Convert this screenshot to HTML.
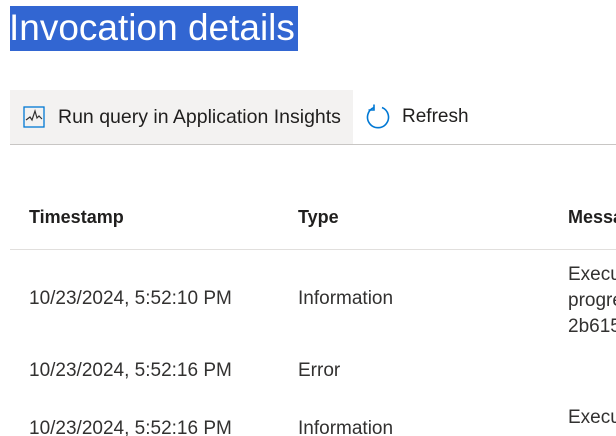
<!DOCTYPE html>
<html><head><meta charset="utf-8"><style>
html,body{margin:0;padding:0;width:616px;height:436px;overflow:hidden;background:#fff;font-family:"Liberation Sans",sans-serif;color:#323130;position:relative;}
.a{position:absolute;white-space:nowrap;}
</style></head><body>
<div class="a" style="left:10px;top:6px;width:288px;height:45px;background:#3266d2;"></div>
<div class="a" style="left:9px;top:5px;font-size:37px;line-height:46px;color:#fff;">Invocation details</div>
<div class="a" style="left:10px;top:90px;width:343px;height:54px;background:#f3f2f1;"></div>
<div class="a" style="left:10px;top:144px;width:606px;height:1px;background:#c8c6c4;"></div>
<svg class="a" style="left:23px;top:106px" width="22" height="22" viewBox="0 0 22 22"><rect x="1" y="1" width="20" height="20" fill="none" stroke="#0078d4" stroke-width="1.3"/><path d="M3 14 L7 11 L9 14 L12 5 L14 12 L16 10 L19 13" fill="none" stroke="#323130" stroke-width="1.2"/></svg>
<div class="a" style="left:58px;top:105px;font-size:19.5px;line-height:24px;color:#201f1e;">Run query in Application Insights</div>
<svg class="a" style="left:365px;top:104px" width="26" height="26" viewBox="0 0 26 26"><path d="M9 3.5 A10.5 10.5 0 1 0 17 3.5" fill="none" stroke="#0078d4" stroke-width="1.6"/><path d="M9 0.5 L9 6 L3.5 6" fill="none" stroke="#0078d4" stroke-width="1.6"/></svg>
<div class="a" style="left:402px;top:105px;font-size:19px;line-height:24px;color:#201f1e;">Refresh</div>
<div class="a" style="left:29px;top:206px;font-size:18px;line-height:22px;font-weight:bold;color:#201f1e;">Timestamp</div>
<div class="a" style="left:298px;top:206px;font-size:18px;line-height:22px;font-weight:bold;color:#201f1e;">Type</div>
<div class="a" style="left:568px;top:206px;font-size:18px;line-height:22px;font-weight:bold;color:#201f1e;">Message</div>
<div class="a" style="left:10px;top:249px;width:606px;height:1px;background:#e1dfdd;"></div>
<div class="a" style="left:29px;top:288px;font-size:19px;line-height:22px;">10/23/2024, 5:52:10 PM</div>
<div class="a" style="left:298px;top:288px;font-size:19px;line-height:22px;">Information</div>
<div class="a" style="left:568px;top:262px;font-size:19px;line-height:26px;">Execu<br>progress<br>2b615</div>
<div class="a" style="left:29px;top:360px;font-size:19px;line-height:22px;">10/23/2024, 5:52:16 PM</div>
<div class="a" style="left:298px;top:360px;font-size:19px;line-height:22px;">Error</div>
<div class="a" style="left:29px;top:418px;font-size:19px;line-height:22px;">10/23/2024, 5:52:16 PM</div>
<div class="a" style="left:298px;top:418px;font-size:19px;line-height:22px;">Information</div>
<div class="a" style="left:568px;top:405px;font-size:19px;line-height:26px;">Execu</div>
</body></html>
